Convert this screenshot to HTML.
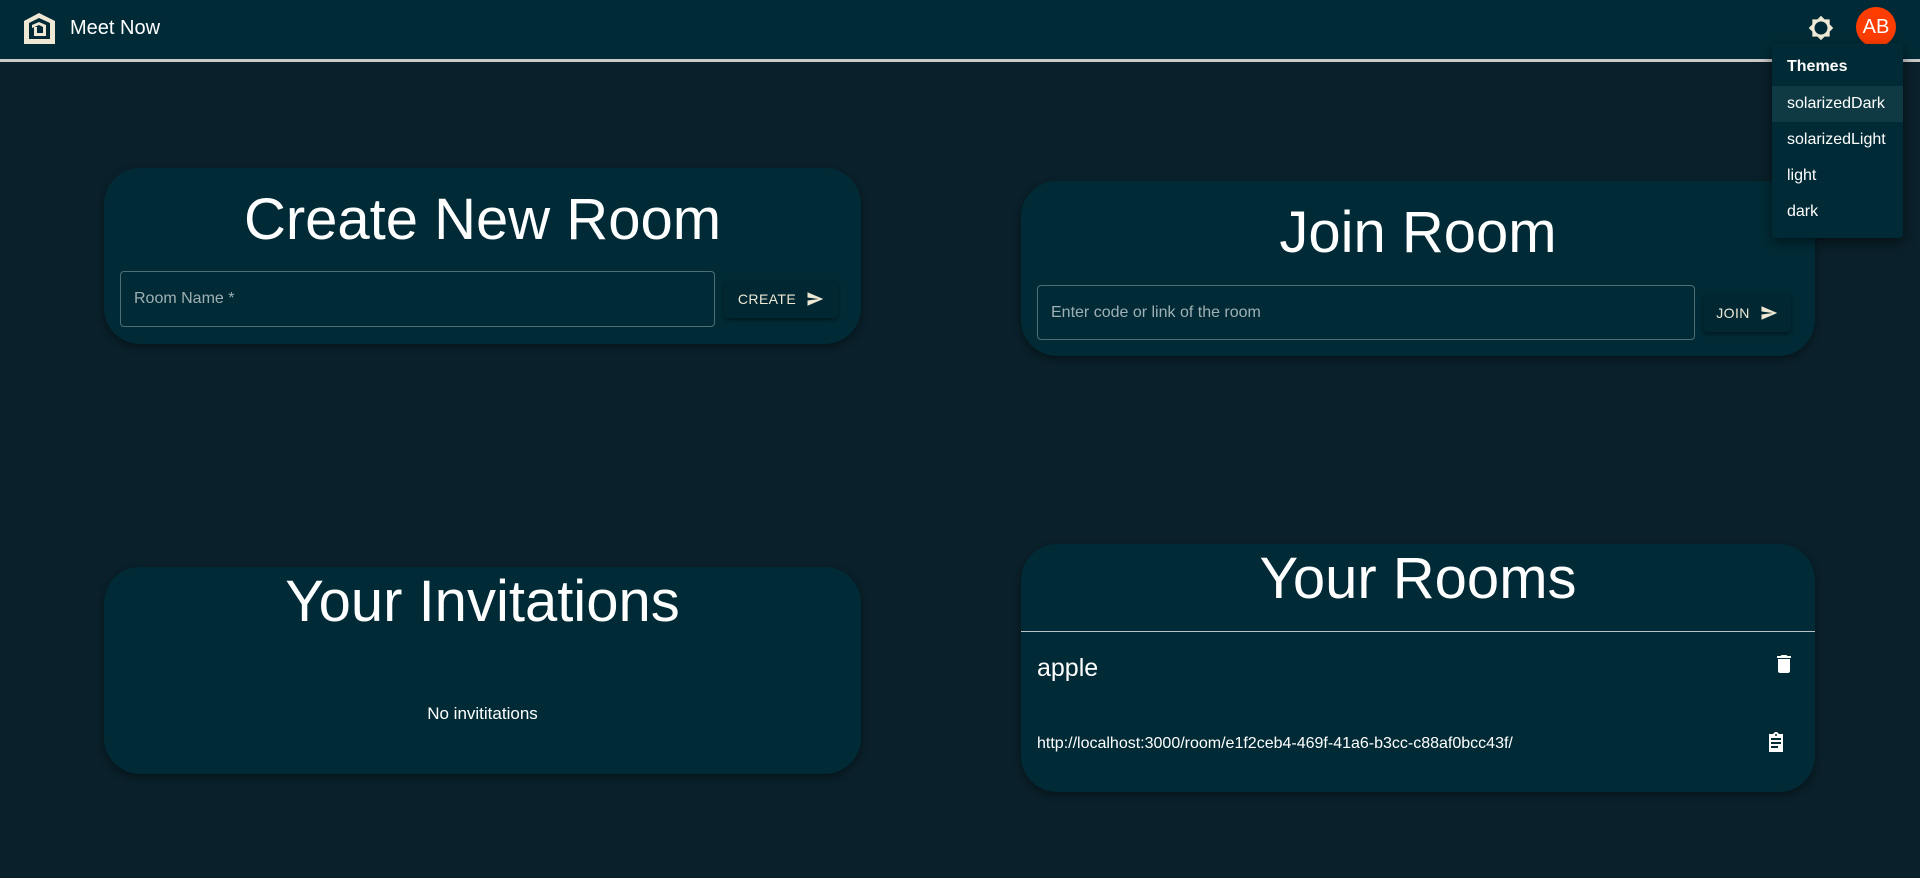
<!DOCTYPE html>
<html><head><meta charset="utf-8"><style>
*{box-sizing:border-box;margin:0;padding:0}
body{width:1920px;height:878px;background:#0a202a;font-family:"Liberation Sans",sans-serif;color:#fff;position:relative;overflow:hidden}
.hdr{position:absolute;left:0;top:0;width:1920px;height:62px;background:#002b36;border-bottom:3px solid #c9c9c9}
.abs{position:absolute}
.card{position:absolute;background:#002b36;border-radius:36px;box-shadow:0 3px 8px rgba(0,0,0,.4)}
.title{position:absolute;left:0;right:0;text-align:center;font-size:58px;line-height:60px;color:#fff}
.inp{position:absolute;border:1px solid #4f6f76;border-radius:4px;color:#9fb0b4;font-size:16px;padding-left:13px;display:flex;align-items:center}
.btn{position:absolute;background:#012832;border-radius:4px;box-shadow:0 2px 4px rgba(0,0,0,.45);color:#eee8d5;font-size:14px;letter-spacing:.4px;display:flex;align-items:center;justify-content:center;gap:10px}
.menu{position:absolute;z-index:10;left:1772px;top:44px;width:131px;height:194px;background:#002b36;border-radius:4px;box-shadow:0 4px 12px rgba(0,0,0,.5);font-size:16px}
.mi{position:absolute;left:0;width:131px;height:36px;padding-left:15px;display:flex;align-items:center}
</style></head><body>
<div class="hdr"></div>
<svg class="abs" style="left:24px;top:13px" width="31" height="31" viewBox="0 0 31 31"><path d="M0 8 L15 0 L31 8 V31 H0Z" fill="#eee8d5"/><path d="M5 10 L15 5 L26 10 V26 H5Z" fill="#002b36"/><path d="M8 12 L15 9 L22 12 V23 H10 V14 H13 V20 H19 V14 L15 12 L8 15Z" fill="#eee8d5"/></svg>
<div class="abs" style="left:70px;top:17px;font-size:20px">Meet Now</div>
<svg class="abs" style="left:1808px;top:15px" width="26" height="26" viewBox="0 0 24 24"><path fill="#eee8d5" d="M20 8.69V4h-4.69L12 .69 8.69 4H4v4.69L.69 12 4 15.31V20h4.69L12 23.31 15.31 20H20v-4.69L23.31 12 20 8.69zM12 18c-3.31 0-6-2.69-6-6s2.69-6 6-6 6 2.69 6 6-2.69 6-6 6z"/><circle cx="12" cy="12" r="4" fill="#002b36"/></svg>
<div class="abs" style="left:1856px;top:7px;width:40px;height:40px;border-radius:50%;background:#ff3d00;font-size:20px;display:flex;align-items:center;justify-content:center">AB</div>
<div class="menu">
<div class="mi" style="top:5px;font-weight:bold">Themes</div>
<div class="mi" style="top:42px;background:#0f3a43">solarizedDark</div>
<div class="mi" style="top:78px">solarizedLight</div>
<div class="mi" style="top:114px">light</div>
<div class="mi" style="top:150px">dark</div>
</div>

<div class="card" style="left:104px;top:168px;width:757px;height:176px">
<div class="title" style="top:22px">Create New Room</div>
<div class="inp" style="left:16px;top:103px;width:595px;height:56px">Room Name *</div>
<div class="btn" style="left:620px;top:112px;width:114px;height:38px">CREATE <svg width="18" height="18" viewBox="0 0 24 24"><path fill="#eee8d5" d="M2.01 21L23 12 2.01 3 2 10l15 2-15 2z"/></svg></div>
</div>

<div class="card" style="left:1021px;top:181px;width:794px;height:175px">
<div class="title" style="top:22px">Join Room</div>
<div class="inp" style="left:16px;top:104px;width:658px;height:55px">Enter code or link of the room</div>
<div class="btn" style="left:682px;top:113px;width:88px;height:38px">JOIN <svg width="18" height="18" viewBox="0 0 24 24"><path fill="#eee8d5" d="M2.01 21L23 12 2.01 3 2 10l15 2-15 2z"/></svg></div>
</div>

<div class="card" style="left:104px;top:567px;width:757px;height:207px">
<div class="title" style="top:5px">Your Invitations</div>
<div class="abs" style="left:0;right:0;top:137px;text-align:center;font-size:17px">No invititations</div>
</div>

<div class="card" style="left:1021px;top:544px;width:794px;height:248px">
<div class="title" style="top:5px">Your Rooms</div>
<div class="abs" style="left:0;right:0;top:87px;height:1px;background:#b8c2c4"></div>
<div class="abs" style="left:16px;top:110px;font-size:25px">apple</div>
<svg class="abs" style="left:751px;top:108px" width="24" height="24" viewBox="0 0 24 24"><path fill="#fff" d="M6 19c0 1.1.9 2 2 2h8c1.1 0 2-.9 2-2V7H6v12zM19 4h-3.5l-1-1h-5l-1 1H5v2h14V4z"/></svg>
<div class="abs" style="left:16px;top:191px;font-size:16px">http://localhost:3000/room/e1f2ceb4-469f-41a6-b3cc-c88af0bcc43f/</div>
<svg class="abs" style="left:743px;top:187px" width="24" height="24" viewBox="0 0 24 24"><path fill="#fff" d="M19 3h-4.18C14.4 1.84 13.3 1 12 1s-2.4.84-2.82 2H5v18h14V3zm-7 0c.55 0 1 .45 1 1s-.45 1-1 1-1-.45-1-1 .45-1 1-1zm2 14H7v-2h7v2zm3-4H7v-2h10v2zm0-4H7V7h10v2z"/></svg>
</div>
</body></html>
